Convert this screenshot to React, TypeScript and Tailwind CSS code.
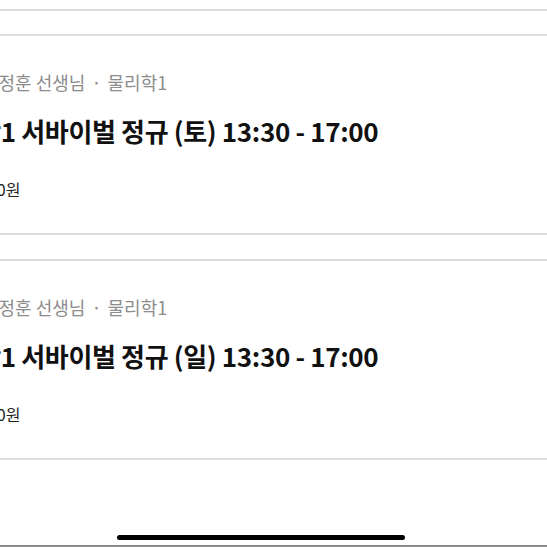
const font = "font-['Apple_SD_Gothic_Neo','Noto_Sans_CJK_KR',sans-serif]";

type Lesson = { teacher: string; title: string; price: string };

const lessons: Lesson[] = [
  { teacher: "김정훈 선생님", title: "물리학1 서바이벌 정규 (토) 13:30 - 17:00", price: "320,000원" },
  { teacher: "김정훈 선생님", title: "물리학1 서바이벌 정규 (일) 13:30 - 17:00", price: "320,000원" },
];

function Card({ lesson }: { lesson: Lesson }) {
  return (
    <div className="h-[201px] border-y-2 border-[#dcdcdc] bg-white overflow-hidden">
      <div className="pt-[34px] whitespace-nowrap">
        <div className="ml-[-18px] text-[18px] leading-[24px] text-[#8c8c8c]">
          {lesson.teacher}
          <span className="mx-[6px]">·</span>
          물리학1
        </div>
        <div className="ml-[-70px] mt-[20px] text-[26px] leading-[34px] font-bold text-[#111] tracking-[-0.35px]">
          {lesson.title}
        </div>
        <div className="ml-[-52px] mt-[31px] text-[16px] leading-[20px] text-[#222]">
          {lesson.price}
        </div>
      </div>
    </div>
  );
}

export default function App() {
  return (
    <div className={`${font} relative w-[547px] h-[547px] bg-white overflow-hidden`}>
      <div className="h-[11px] border-b-2 border-[#dcdcdc]" />
      <div className="flex flex-col gap-[24px] mt-[23px]">
        {lessons.map((l, i) => (
          <Card key={i} lesson={l} />
        ))}
      </div>
      <div className="absolute left-[117px] top-[535px] w-[288px] h-[5px] rounded-full bg-black" />
      <div className="absolute left-0 bottom-0 w-full h-[2px] bg-[#8a8a8a]" />
    </div>
  );
}
